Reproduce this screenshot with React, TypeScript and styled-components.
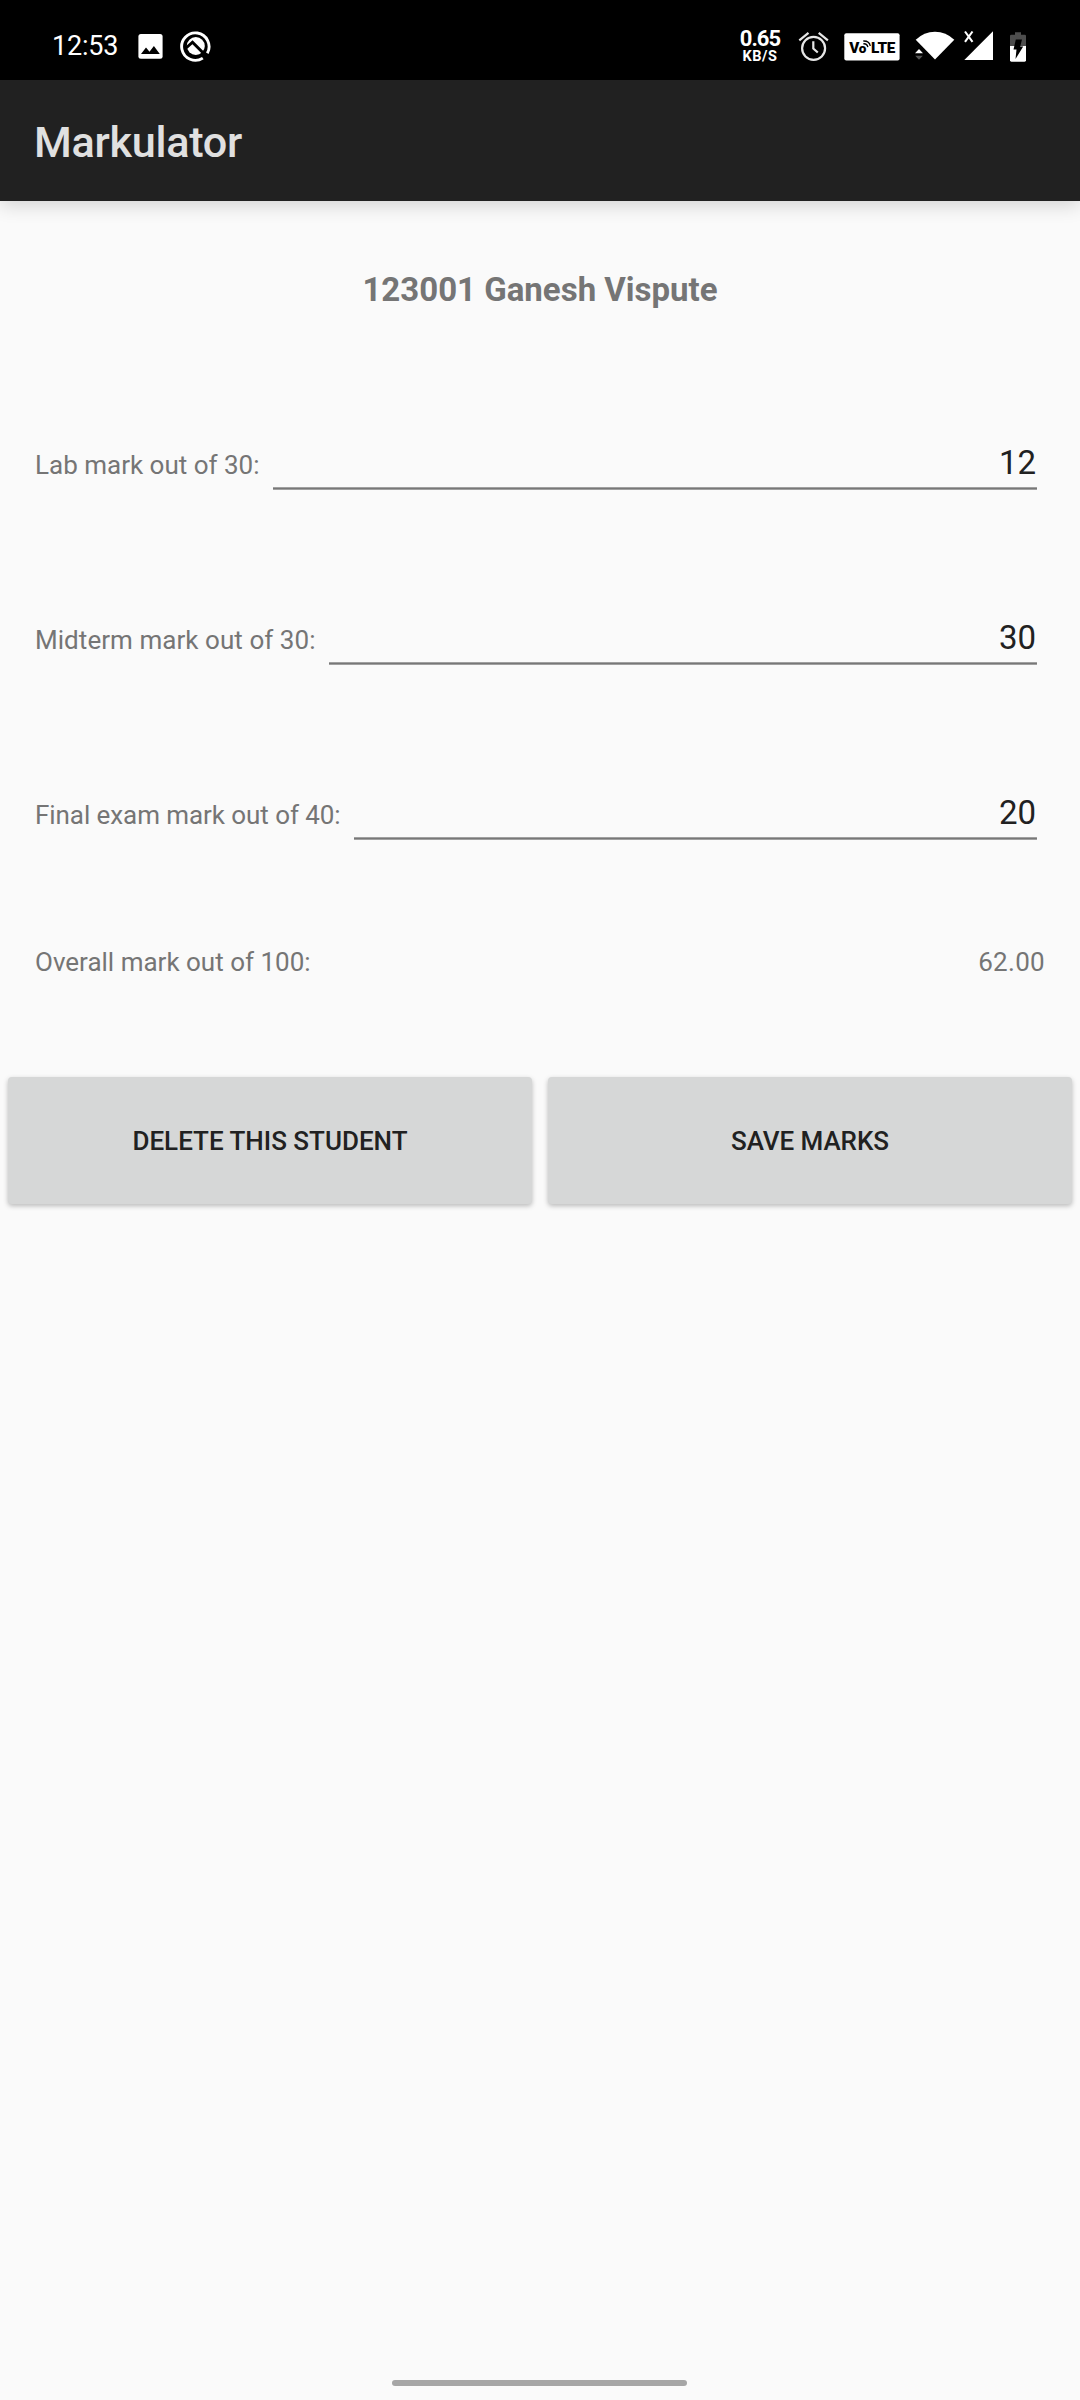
import React, { useState } from "react";
import styled, { createGlobalStyle } from "styled-components";

const GlobalStyle = createGlobalStyle`
  *, *::before, *::after { box-sizing: border-box; }
  body { margin: 0; background: #fafafa; font-family: Roboto, sans-serif; }
`;

const Screen = styled.div`
  display: flex;
  flex-direction: column;
  width: 1080px;
  height: 2400px;
  background: #fafafa;
  color: #757575;
  overflow: hidden;
`;

const StatusBar = styled.header`
  display: flex;
  justify-content: space-between;
  flex: none;
  height: 80px;
  padding: 30px 54px 0 52px;
  background: #000;
  color: #fff;
`;

const StatusGroup = styled.div`
  display: flex;
  align-items: flex-start;
`;

const Clock = styled.time`
  width: 86px;
  font-size: 27px;
  line-height: 32px;
  letter-spacing: -0.2px;
`;

const Glyph = styled.svg<{ $gap?: number }>`
  display: block;
  flex: none;
  margin-left: ${(p) => p.$gap ?? 0}px;
`;

const NetSpeed = styled.div`
  display: flex;
  flex-direction: column;
  align-items: center;
  width: 40px;
  font-weight: 700;
  white-space: nowrap;
`;

const Rate = styled.span`
  font-size: 22px;
  line-height: 17px;
  letter-spacing: -0.9px;
`;

const Unit = styled.span`
  font-size: 14.5px;
  line-height: 20px;
  letter-spacing: 0.6px;
`;

const AppBar = styled.div`
  position: relative;
  display: flex;
  flex: none;
  align-items: center;
  height: 121px;
  padding: 4px 34px 0;
  background: #212121;
  box-shadow: 0 4px 18px rgba(0, 0, 0, 0.16);
`;

const Title = styled.h1`
  margin: 0;
  color: #e0e0e0;
  font-size: 43.2px;
  font-weight: 500;
  line-height: 52px;
  letter-spacing: -0.27px;
`;

const Form = styled.main`
  display: flex;
  flex: 1;
  flex-direction: column;
  padding-top: 69px;
`;

const Student = styled.h2`
  margin: 0 0 133px;
  font-size: 33px;
  font-weight: 700;
  line-height: 40px;
  text-align: center;
`;

const Row = styled.div`
  display: flex;
  align-items: flex-start;
  height: 175px;
  padding: 0 43px 0 35px;
`;

const Label = styled.label<{ $tracking: number }>`
  flex: none;
  margin-top: 6px;
  font-size: 26px;
  line-height: 32px;
  letter-spacing: ${(p) => p.$tracking}px;
`;

const MarkInput = styled.input`
  flex: 1;
  min-width: 0;
  height: 47px;
  margin-left: 13.5px;
  padding: 0 1px 9px 0;
  border: 0;
  border-radius: 0;
  outline: 0;
  background: linear-gradient(#a0a0a0 0 1px, #777 1px 2px, #a0a0a0 2px 3px) bottom / 100% 3px no-repeat;
  color: #212121;
  font: 400 33px/38px Roboto, sans-serif;
  text-align: right;
`;

const Overall = styled.div`
  display: flex;
  justify-content: space-between;
  margin-top: -22px;
  padding: 0 35px;
  font-size: 26px;
  line-height: 32px;
`;

const Total = styled.output`
  letter-spacing: 0.3px;
`;

const Actions = styled.div`
  display: flex;
  gap: 16px;
  margin-top: 99px;
  padding: 0 8px;
`;

const Button = styled.button<{ $tracking?: number }>`
  flex: 1;
  height: 127px;
  padding: 0;
  border: 0;
  border-radius: 4px;
  background: #d6d7d7;
  box-shadow: 0 2px 5px rgba(0, 0, 0, 0.26);
  color: #212121;
  font: 500 26px/32px Roboto, sans-serif;
  letter-spacing: ${(p) => p.$tracking ?? 0}px;
`;

const NavArea = styled.footer`
  display: flex;
  flex: none;
  justify-content: center;
  height: 20px;
  padding-right: 1px;
`;

const HomeHandle = styled.span`
  width: 295px;
  height: 6px;
  border-radius: 3px;
  background: #a6a6a6;
`;

const PhotoIcon = () => (
  <Glyph width="25" height="32" viewBox="138 30 25 32">
    <rect x="138.4" y="34" width="24.2" height="24.8" rx="2.5" fill="#fff" />
    <path d="M141 54l5-6.5 3.500 4.200 4.400-5.600 5.900 7.900z" fill="#000" />
  </Glyph>
);

const QIcon = () => (
  <Glyph width="32" height="33" viewBox="179.500 30 32 33" $gap={16.5}>
    <path d="M202.300 58.100A13.700 13.700 0 1 1 206.800 53.300" fill="none" stroke="#fff" strokeWidth="2.900" />
    <circle cx="195.300" cy="46" r="9" fill="#fff" />
    <path d="M185.500 48l6.500-5.800 16 16" fill="none" stroke="#000" strokeWidth="3" />
  </Glyph>
);

const AlarmIcon = () => (
  <Glyph width="32" height="32" viewBox="798 30 32 32" $gap={18}>
    <g fill="none" stroke="#e6e6e6" strokeWidth="2.200">
      <circle cx="813.600" cy="48.300" r="11.500" />
      <path d="M799.300 40.300l9.200-7.500M827.900 40.300l-9.200-7.500M813.300 41.300v7.200l4.500 4" />
    </g>
  </Glyph>
);

const VolteIcon = () => (
  <Glyph width="56" height="32" viewBox="844 30 56 32" $gap={14}>
    <rect x="844.300" y="33.300" width="55.300" height="27.200" rx="2" fill="#fff" />
    <g fill="#000" fontFamily="Roboto, sans-serif" fontWeight="900">
      <text x="849.300" y="52.700" fontSize="15.300">V</text>
      <text x="858.800" y="52.700" fontSize="13.500">o</text>
      <text x="871" y="52.700" fontSize="15.300" textLength="24.300">LTE</text>
    </g>
    <path d="M863.300 43.800q3.800-.4 4.600 3.400M863.300 41q6-.3 7 5" fill="none" stroke="#000" strokeWidth="1.300" />
  </Glyph>
);

const WifiIcon = () => (
  <Glyph width="40" height="32" viewBox="915 30 40 32" $gap={15}>
    <path d="M935 59.600L915.700 39.800Q924 31.700 935 31.700T954.300 39.800z" fill="#fff" />
    <path d="M915 53.300l4-4.300 4 4.300z" fill="#fff" />
    <path d="M915.200 55.700h7.600l-3.800 4z" fill="#555" />
  </Glyph>
);

const SignalIcon = () => (
  <Glyph width="30" height="32" viewBox="964 30 30 32" $gap={9}>
    <path d="M993 31.300V60h-28.700z" fill="#fff" />
    <path d="M965 31.500l7.500 10.300M972.500 31.500L965 41.800" stroke="#fff" strokeWidth="2.100" />
  </Glyph>
);

const BatteryIcon = () => (
  <Glyph width="16" height="33" viewBox="1010 30 16 33" $gap={16}>
    <path d="M1010 46V36q0-1.300 1.300-1.300h3.700V32.300h6v2.400h3.700q1.300 0 1.300 1.300v10z" fill="#4d4d4d" />
    <path d="M1010 46h16v14.300q0 1.400-1.400 1.400h-13.200q-1.400 0-1.400-1.400z" fill="#fff" />
    <path d="M1015.800 39.500h6.200l-1.800 7h3l-7.700 12.500 1-9.500h-3z" fill="#000" />
  </Glyph>
);

export default function App() {
  const [marks, setMarks] = useState({ lab: "12", midterm: "30", exam: "20" });
  const fields = [
    { key: "lab", label: "Lab mark out of 30:", tracking: 0 },
    { key: "midterm", label: "Midterm mark out of 30:", tracking: 0.05 },
    { key: "exam", label: "Final exam mark out of 40:", tracking: -0.07 },
  ] as const;
  const total = Number(marks.lab) + Number(marks.midterm) + Number(marks.exam);

  return (
    <>
      <GlobalStyle />
      <Screen>
        <StatusBar>
          <StatusGroup>
            <Clock>12:53</Clock>
            <PhotoIcon />
            <QIcon />
          </StatusGroup>
          <StatusGroup>
            <NetSpeed>
              <Rate>0.65</Rate>
              <Unit>KB/S</Unit>
            </NetSpeed>
            <AlarmIcon />
            <VolteIcon />
            <WifiIcon />
            <SignalIcon />
            <BatteryIcon />
          </StatusGroup>
        </StatusBar>
        <AppBar>
          <Title>Markulator</Title>
        </AppBar>
        <Form>
          <Student>123001 Ganesh Vispute</Student>
          {fields.map((f) => (
            <Row key={f.key}>
              <Label htmlFor={f.key} $tracking={f.tracking}>
                {f.label}
              </Label>
              <MarkInput
                id={f.key}
                value={marks[f.key]}
                onChange={(e) => setMarks({ ...marks, [f.key]: e.target.value })}
              />
            </Row>
          ))}
          <Overall>
            <span>Overall mark out of 100:</span>
            <Total>{total.toFixed(2)}</Total>
          </Overall>
          <Actions>
            <Button>DELETE THIS STUDENT</Button>
            <Button $tracking={-0.08}>SAVE MARKS</Button>
          </Actions>
        </Form>
        <NavArea>
          <HomeHandle />
        </NavArea>
      </Screen>
    </>
  );
}
